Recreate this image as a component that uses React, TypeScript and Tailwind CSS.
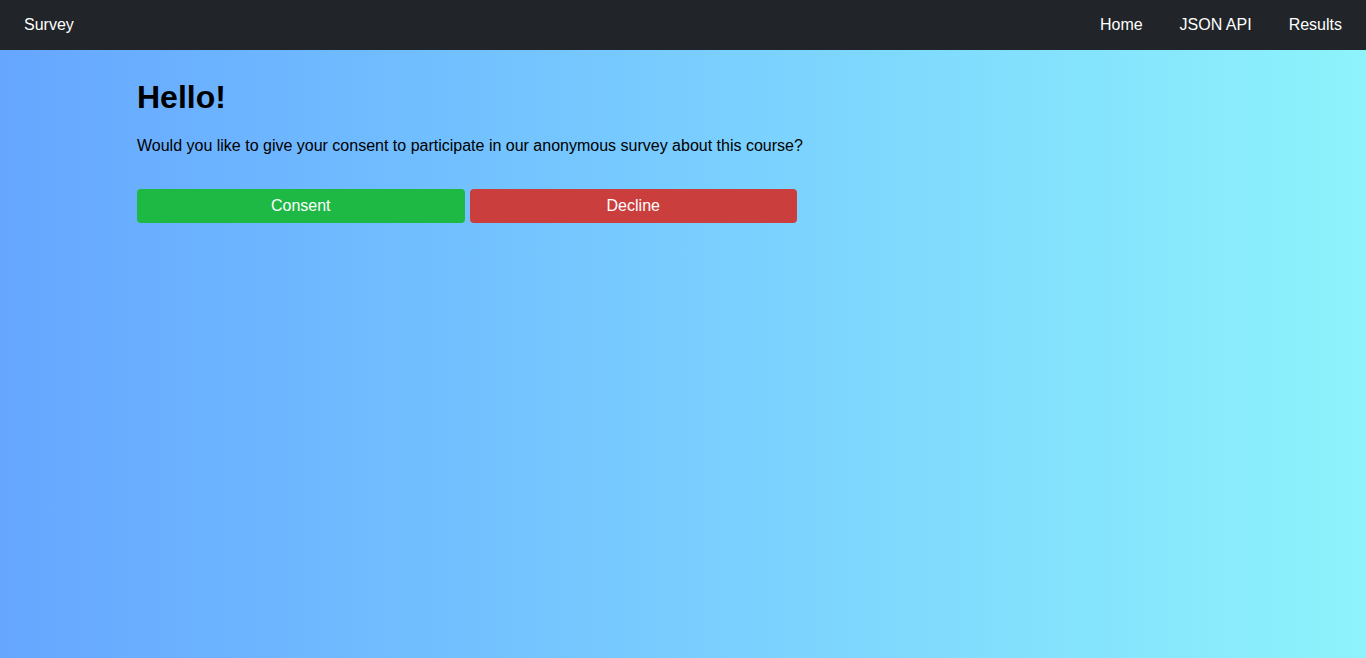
export default function App() {
  return (
    <div className="min-h-screen flex flex-col font-['Liberation_Sans',Arial,sans-serif]">
      {/* Navbar */}
      <nav className="h-[50px] bg-[#212529] px-6 flex items-center justify-between text-white text-base">
        <span>Survey</span>
        <div className="flex items-center gap-[37px]">
          <a href="#">Home</a>
          <a href="#">JSON API</a>
          <a href="#">Results</a>
        </div>
      </nav>

      {/* Main */}
      <main className="flex-1 h-[608px] bg-gradient-to-r from-[#66a6ff] to-[#8ef3fb]">
        <div className="pl-[137px] pt-[28px]">
          <h1 className="text-[32px] leading-[38px] font-bold text-black">Hello!</h1>
          <p className="mt-[18px] text-base leading-6 text-black">
            Would you like to give your consent to participate in our anonymous survey about this course?
          </p>
          <div className="mt-[31px] w-[660px] flex gap-[5px]">
            <button className="flex-1 h-[34px] rounded bg-[#1eb845] text-white text-base">Consent</button>
            <button className="flex-1 h-[34px] rounded bg-[#cb3e3e] text-white text-base">Decline</button>
          </div>
        </div>
      </main>
    </div>
  );
}
